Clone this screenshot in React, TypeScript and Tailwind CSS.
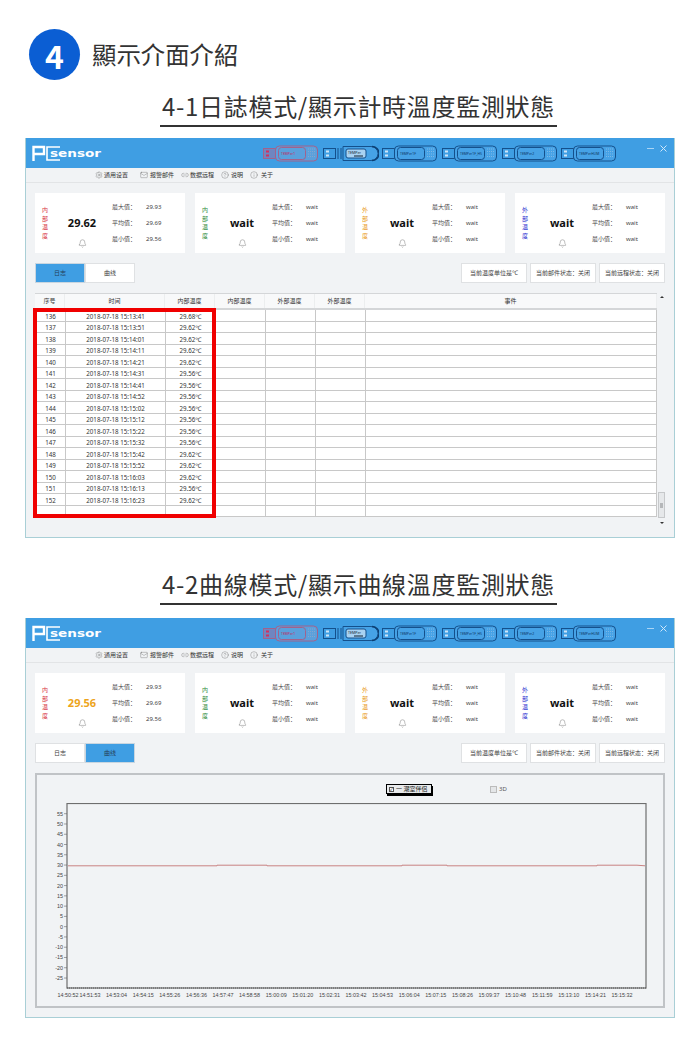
import { Bell, CircleHelp, Info, Link2, Mail, Settings } from "lucide-react";

const logRows = [
  ["136", "15:13:41", "29.68"],
  ["137", "15:13:51", "29.62"],
  ["138", "15:14:01", "29.62"],
  ["139", "15:14:11", "29.62"],
  ["140", "15:14:21", "29.62"],
  ["141", "15:14:31", "29.56"],
  ["142", "15:14:41", "29.56"],
  ["143", "15:14:52", "29.56"],
  ["144", "15:15:02", "29.56"],
  ["145", "15:15:12", "29.56"],
  ["146", "15:15:22", "29.56"],
  ["147", "15:15:32", "29.56"],
  ["148", "15:15:42", "29.62"],
  ["149", "15:15:52", "29.62"],
  ["150", "15:16:03", "29.62"],
  ["151", "15:16:13", "29.56"],
  ["152", "15:16:23", "29.62"],
];

const columns = ["序号", "时间", "内部温度", "内部温度", "外部温度", "外部温度", "事件"];
const colGrid = "grid grid-cols-[30px_100px_50px_50px_50px_50px_1fr]";

const xLabels = [
  "14:50:52", "14:51:53", "14:53:04", "14:54:15", "14:55:26", "14:56:36", "14:57:47", "14:58:58",
  "15:00:09", "15:01:20", "15:02:31", "15:03:42", "15:04:53", "15:06:04", "15:07:15", "15:08:26",
  "15:09:37", "15:10:48", "15:11:59", "15:13:10", "15:14:21", "15:15:32",
];
const yLabels = [55, 50, 45, 40, 35, 30, 25, 20, 15, 10, 5, 0, -5, -10, -15, -20, -25];

function UsbStick({ label, pink, round }: { label: string; pink?: boolean; round?: boolean }) {
  const c = pink ? "#a2628c" : "#14508c";
  const fill = pink ? "#5aa0dc" : "#46a2e6";
  return (
    <svg width="56" height="17" viewBox="0 0 56 17" className="shrink-0">
      <rect x="0.5" y="3.5" width="12" height="10" fill={pink ? "#6f86c0" : "none"} stroke={c} />
      <rect x="3" y="5.5" width="3" height="2" fill={pink ? "#d03060" : "#cfe5f8"} />
      <rect x="3" y="9.5" width="3" height="2" fill={pink ? "#d03060" : "#cfe5f8"} />
      {round ? (
        <>
          <path d="M15 3v11M18 3v11" stroke={c} />
          <path d="M20 1.5h28a7 7 0 0 1 0 14H20z" fill={fill} stroke={c} />
          <path d="M49 1.5a7 7 0 0 1 0 14" fill="none" stroke="#0d3f73" strokeWidth="1.4" />
          <rect x="23" y="4" width="20" height="9" rx="2" fill="#a9d2f2" stroke={c} />
          <text x="25" y="8.5" fontSize="3.6" fill="#123" fontFamily="Noto Sans, sans-serif">TEMPer</text>
          <path d="M31 11h9" stroke="#123" />
        </>
      ) : (
        <>
          <rect x="12.5" y="1" width="42" height="15" rx="4" fill={fill} stroke={c} />
          <rect x="15.5" y="2.5" width="27" height="12" rx="3" fill={fill} stroke={c} />
          <text x="18" y="10" fontSize="3.4" fill={pink ? "#c02858" : "#0d3560"} fontFamily="Noto Sans, sans-serif">{label}</text>
          <path d="M45 4h8M45 6.5h8M45 9h8M45 11.5h8" stroke={pink ? "#86a6cf" : "#7db8e6"} strokeDasharray="1 1" />
        </>
      )}
    </svg>
  );
}

function WindowBar() {
  return (
    <div className="flex h-[30px] items-center bg-[#3f9ee3] pl-[6px]">
      <svg width="72" height="17" viewBox="0 0 72 17" className="shrink-0">
        <path d="M1.5 16V2h10.5v7H1.5" fill="none" stroke="#fff" strokeWidth="2.4" />
        <path d="M28 2H15v13h13" fill="none" stroke="#fff" strokeWidth="1.6" />
        <text x="18" y="12" fontSize="10" fontWeight="700" fill="#fff" textLength="51" lengthAdjust="spacingAndGlyphs" fontFamily="DejaVu Sans, sans-serif">sensor</text>
      </svg>
      <div className="ml-[159px] flex gap-[3.7px]">
        <UsbStick label="TEMPer1" pink />
        <UsbStick label="TEMPer" round />
        <UsbStick label="TEMPer1F" />
        <UsbStick label="TEMPer1F_H5" />
        <UsbStick label="TEMPer2" />
        <UsbStick label="TEMPerHUM" />
      </div>
      <div className="ml-[30px] flex items-center gap-[6px] pb-[9px]">
        <span className="block h-px w-[7px] bg-[#a9d4f5]" />
        <svg width="7" height="7" viewBox="0 0 7 7">
          <path d="M0.5 0.5l6 6M6.5 0.5l-6 6" stroke="#cfe7fa" strokeWidth="1" />
        </svg>
      </div>
    </div>
  );
}

function MenuBar() {
  const iconCls = "h-[8px] w-[8px] text-[#555]";
  return (
    <div className="flex h-[15px] items-center border-b border-[#e2e4e6] bg-[#f1f3f5] pl-[69px] text-[6px] text-[#333]">
      <div className="flex items-center gap-px"><Settings className={iconCls} strokeWidth={1} />通用设置</div>
      <div className="ml-[12px] flex items-center gap-[2px]"><Mail className={iconCls} strokeWidth={1} />报警邮件</div>
      <div className="ml-[7px] flex items-center gap-px"><Link2 className={iconCls} strokeWidth={1} />数据远程</div>
      <div className="ml-[7px] flex items-center gap-[2px]"><CircleHelp className={iconCls} strokeWidth={1} />说明</div>
      <div className="ml-[7px] flex items-center gap-[3px]"><Info className={iconCls} strokeWidth={1} />关于</div>
    </div>
  );
}

function SensorCard({ title, titleCls, value, valueCls, max, avg, min }: {
  title: string; titleCls: string; value: string; valueCls: string; max: string; avg: string; min: string;
}) {
  return (
    <div className="flex h-[60px] bg-white">
      <div className={`flex w-[20px] flex-col items-center pt-[13px] text-[6px] leading-[8.7px] ${titleCls}`}>
        {title.split("").map((ch, i) => <span key={i}>{ch}</span>)}
      </div>
      <div className="flex w-[54px] flex-col items-center pt-[22px]">
        <div className={`h-[16px] text-[11px] font-bold leading-[16px] ${valueCls}`}>{value}</div>
        <Bell className="mt-[8px] h-[9px] w-[9px] text-[#555]" strokeWidth={1} />
      </div>
      <div className="ml-[3px] grid grid-cols-[34px_auto] content-start pt-[6px] text-[6px] leading-[16px] text-[#444]">
        <span>最大值：</span><span>{max}</span>
        <span>平均值：</span><span>{avg}</span>
        <span>最小值：</span><span>{min}</span>
      </div>
    </div>
  );
}

function Toolbar({ active }: { active: "log" | "curve" }) {
  const btn = "flex h-[20px] items-center justify-center border border-[#dfe1e3] bg-white text-[6px] text-[#444]";
  const on = "flex h-[20px] items-center justify-center border border-[#c9d6e0] bg-[#3f9ee3] text-[6px] text-[#25415a]";
  return (
    <div className="mt-[10px] flex">
      <div className={`w-[50px] ${active === "log" ? on : btn}`}>日志</div>
      <div className={`w-[50px] ${active === "curve" ? on : btn}`}>曲线</div>
      <div className={`ml-auto w-[66px] ${btn}`}>当前温度单位是℃</div>
      <div className={`ml-[3px] w-[66px] ${btn}`}>当前邮件状态：关闭</div>
      <div className={`ml-[3px] w-[66px] ${btn}`}>当前远程状态：关闭</div>
    </div>
  );
}

function LogTable() {
  const cell = "flex items-center justify-center border-r border-[#c8c8c8] pt-[3px]";
  const rows = [...logRows, ["", "", ""]];
  return (
    <div className="relative mt-[10px] flex">
      <div className="w-[622px] text-[6.2px] text-[#333]">
        <div className={`${colGrid} h-[17px] border-b-2 border-t border-[#d4d6d8] bg-[#f8f9fa]`}>
          {columns.map((c, i) => (
            <div key={i} className="flex items-center justify-center border-r border-[#eceeef] text-[6px]">{c}</div>
          ))}
        </div>
        <div className="border-l border-[#c8c8c8] bg-white">
          {rows.map((r, i) => (
            <div key={i} className={`${colGrid} h-[11.5px] border-b border-[#c8c8c8] leading-none`}>
              <div className={cell}>{r[0]}</div>
              <div className={cell}>{r[0] && `2018-07-18 ${r[1]}`}</div>
              <div className={cell}>{r[0] && `${r[2]}℃`}</div>
              <div className={cell} />
              <div className={cell} />
              <div className={cell} />
              <div className={cell} />
            </div>
          ))}
        </div>
      </div>
      <div className="ml-px flex h-[232px] w-[7px] flex-col items-center self-start">
        <span className="mt-[3px] h-0 w-0 border-x-[2px] border-b-[2px] border-x-transparent border-b-[#333]" />
        <div className="mt-auto flex h-[26px] w-[7px] items-center justify-center border border-[#c6c8ca] bg-[#e6e8ea]">
          <span className="block h-[5px] w-[3px] bg-[#b5b7b9]" />
        </div>
        <span className="mb-px mt-[4px] h-0 w-0 border-x-[2px] border-t-[2px] border-x-transparent border-t-[#333]" />
      </div>
      <div className="absolute left-[-2px] top-[15px] h-[210px] w-[183px] border-4 border-[#f00000]" />
    </div>
  );
}

function CurvePanel() {
  return (
    <div className="mt-[10px] h-[235px] w-[630px] border-2 border-[#c0c3c6] bg-[#f1f3f5]">
      <div className="flex h-[28px] items-center pl-[349px]">
        <div className="flex h-[10px] w-[46px] items-center gap-[2px] border border-black bg-[#e8eaec] pl-[2px] text-[6px] text-[#222] shadow-[1px_2px_0_#000]">
          <span className="flex h-[5px] w-[5px] items-center justify-center border border-[#555] bg-white text-[5px] leading-none">✓</span>
          <span className="whitespace-nowrap">一 潮室伴侣</span>
        </div>
        <span className="ml-[58px] h-[7px] w-[7px] border border-[#bbb] bg-[#e4e6e8]" />
        <span className="ml-[2px] text-[6px] text-[#555]">3D</span>
      </div>
      <svg width="626" height="203" viewBox="0 0 626 203" className="block" fontFamily="Liberation Sans, sans-serif">
        <rect x="30" y="0.5" width="579" height="184.5" fill="#f1f3f5" stroke="#6e6e6e" strokeWidth="1.2" />
        {yLabels.map((v, i) => {
          const y = 10.7 + i * 10.27;
          return (
            <g key={v}>
              <line x1="27" x2="30" y1={y} y2={y} stroke="#666" strokeWidth="0.6" />
              <text x="26" y={y + 2} fontSize="5.4" textAnchor="end" fill="#444">{v}</text>
            </g>
          );
        })}
        {xLabels.map((t, i) => {
          const x = i === 0 ? 31 : 53 + (i - 1) * 26.6;
          return <text key={t} x={x} y="193.7" fontSize="5.4" textAnchor="middle" fill="#444">{t}</text>;
        })}
        <polyline
          points="31,62.8 180,62.8 180,62.2 230,62.2 230,62.8 365,62.8 365,62.2 410,62.2 410,62.8 560,62.8 560,62.2 600,62.2 608,62.8"
          fill="none"
          stroke="#c98282"
          strokeWidth="1"
        />
        <line x1="30" x2="609" y1="185" y2="185" stroke="#555" strokeDasharray="1 1" />
      </svg>
    </div>
  );
}

function AppWindow({ mode }: { mode: "log" | "curve" }) {
  const isLog = mode === "log";
  return (
    <div className="mx-[25px] h-[400px] border-x border-b border-[#a9cfd6] bg-[#f1f3f5] font-['Noto_Sans','Noto_Sans_CJK_SC',sans-serif]">
      <WindowBar />
      <MenuBar />
      <div className="px-[9px] pt-[10px]">
        <div className="grid grid-cols-4 gap-[10px]">
          <SensorCard
            title="内部温度"
            titleCls="text-[#d8343f]"
            value={isLog ? "29.62" : "29.56"}
            valueCls={isLog ? "text-[#111]" : "text-[#eda41c]"}
            max="29.93"
            avg="29.69"
            min="29.56"
          />
          <SensorCard title="内部温度" titleCls="text-[#2e8b3a]" value="wait" valueCls="text-[#111]" max="wait" avg="wait" min="wait" />
          <SensorCard title="外部温度" titleCls="text-[#e99a22]" value="wait" valueCls="text-[#111]" max="wait" avg="wait" min="wait" />
          <SensorCard title="外部温度" titleCls="text-[#2b2fd0]" value="wait" valueCls="text-[#111]" max="wait" avg="wait" min="wait" />
        </div>
        <Toolbar active={mode} />
        {isLog ? <LogTable /> : <CurvePanel />}
      </div>
    </div>
  );
}

function SectionTitle({ children, spacing }: { children: string; spacing: string }) {
  return (
    <div className={`flex justify-center pl-[17px] ${spacing}`}>
      <h2 className="h-[36px] border-b-2 border-[#333] px-[2px] text-[24px] font-normal leading-[30px] tracking-[0.7px] text-[#333]">
        {children}
      </h2>
    </div>
  );
}

export default function App() {
  return (
    <div className="h-[1040px] w-[700px] overflow-hidden bg-white font-['Noto_Sans_CJK_TC','Noto_Sans',sans-serif]">
      <div className="flex items-center gap-[12px] pl-[29px] pt-[29px]">
        <div className="flex h-[51px] w-[51px] items-center justify-center rounded-full bg-[#0b5ed3] text-[32px] font-bold leading-none text-white">
          4
        </div>
        <h1 className="text-[24.4px] font-normal leading-none text-[#333]">顯示介面介紹</h1>
      </div>
      <SectionTitle spacing="mt-[11px] mb-[11px]">4-1日誌模式/顯示計時溫度監測狀態</SectionTitle>
      <AppWindow mode="log" />
      <SectionTitle spacing="mt-[31px] mb-[13px]">4-2曲線模式/顯示曲線溫度監測狀態</SectionTitle>
      <AppWindow mode="curve" />
    </div>
  );
}
